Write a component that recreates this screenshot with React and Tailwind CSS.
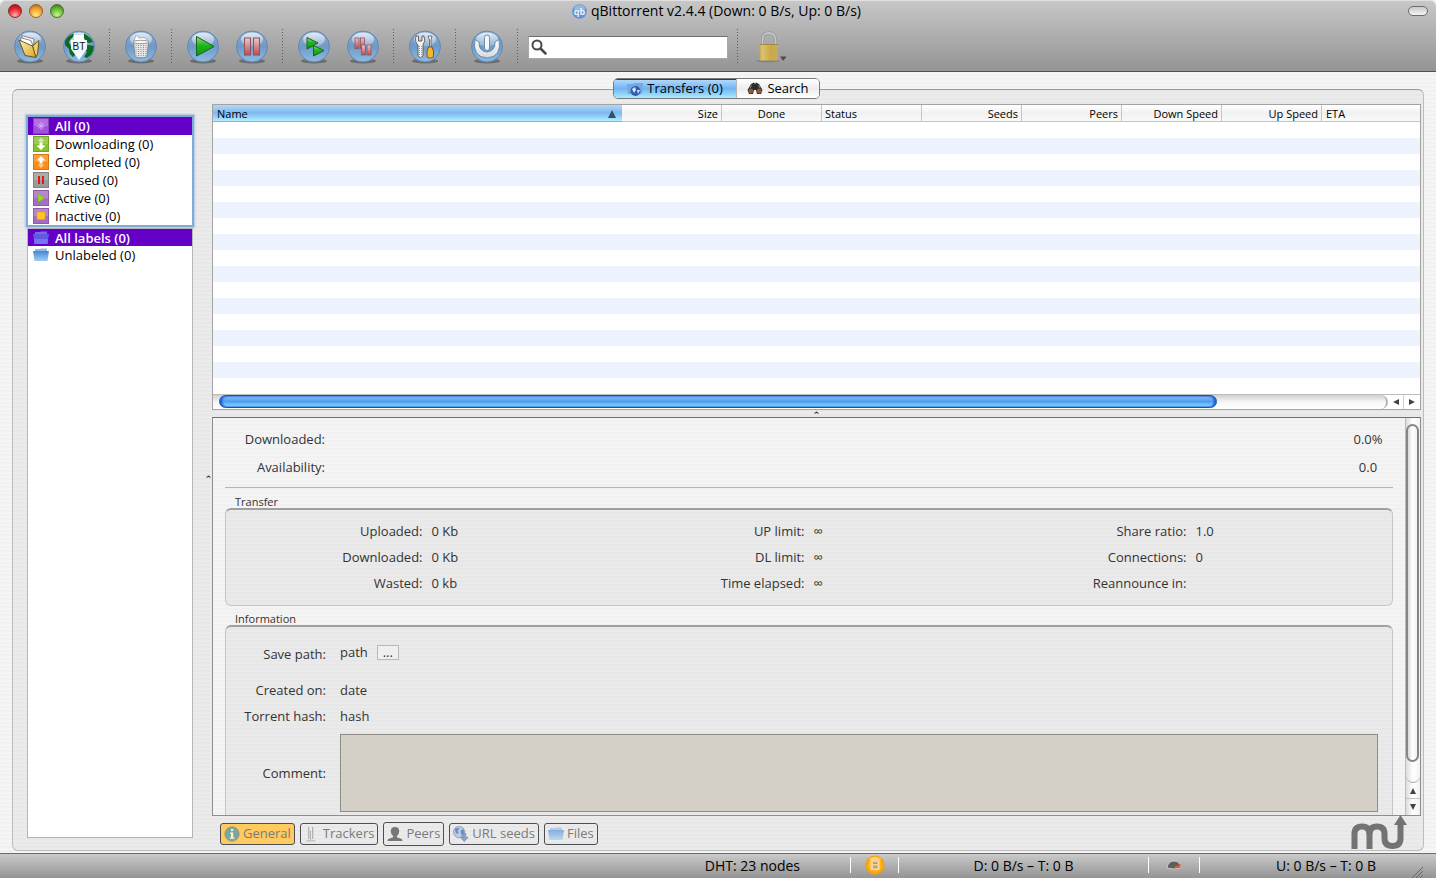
const SIDEBAR_FILTERS = [
  { id: "all", label: "All (0)" },
  { id: "downloading", label: "Downloading (0)" },
  { id: "completed", label: "Completed (0)" },
  { id: "paused", label: "Paused (0)" },
  { id: "active", label: "Active (0)" },
  { id: "inactive", label: "Inactive (0)" },
];

const COLUMNS = [
  { label: "Size", align: "text-right" },
  { label: "Done", align: "text-center" },
  { label: "Status", align: "text-left" },
  { label: "Seeds", align: "text-right" },
  { label: "Peers", align: "text-right" },
  { label: "Down Speed", align: "text-right" },
  { label: "Up Speed", align: "text-right" },
];

const TRANSFER_STATS = [
  [
    ["Uploaded:", "0 Kb"],
    ["Downloaded:", "0 Kb"],
    ["Wasted:", "0 kb"],
  ],
  [
    ["UP limit:", "∞"],
    ["DL limit:", "∞"],
    ["Time elapsed:", "∞"],
  ],
  [
    ["Share ratio:", "1.0"],
    ["Connections:", "0"],
    ["Reannounce in:", ""],
  ],
];

/* ---------- shared gradients ---------- */

function Gradients() {
  return (
    <svg width="0" height="0" className="absolute" aria-hidden="true">
      <defs>
        <linearGradient id="orb" x1="0" y1="0" x2="0" y2="1">
          <stop offset="0" stopColor="#8fb0d3" />
          <stop offset="0.5" stopColor="#7099c6" />
          <stop offset="1" stopColor="#8dbbe6" />
        </linearGradient>
        <linearGradient id="gloss" x1="0" y1="0" x2="0" y2="1">
          <stop offset="0" stopColor="#fff" stopOpacity="0.75" />
          <stop offset="1" stopColor="#fff" stopOpacity="0.2" />
        </linearGradient>
        <linearGradient id="green" x1="0" y1="0" x2="0" y2="1">
          <stop offset="0" stopColor="#8fe08a" />
          <stop offset="0.45" stopColor="#1fb61c" />
          <stop offset="1" stopColor="#0a9a0a" />
        </linearGradient>
        <linearGradient id="red" x1="0" y1="0" x2="0" y2="1">
          <stop offset="0" stopColor="#ecc6cb" />
          <stop offset="1" stopColor="#c14a4e" />
        </linearGradient>
        <linearGradient id="gold" x1="0" y1="0" x2="1" y2="1">
          <stop offset="0" stopColor="#fdf3c0" />
          <stop offset="1" stopColor="#d9a520" />
        </linearGradient>
        <linearGradient id="silver" x1="0" y1="0" x2="0" y2="1">
          <stop offset="0" stopColor="#fff" />
          <stop offset="1" stopColor="#d4d8dc" />
        </linearGradient>
        <linearGradient id="brass" x1="0" y1="0" x2="1" y2="0">
          <stop offset="0" stopColor="#c3a850" />
          <stop offset="0.15" stopColor="#d8c372" />
          <stop offset="0.6" stopColor="#cba943" />
          <stop offset="1" stopColor="#c5ab5c" />
        </linearGradient>
        <linearGradient id="folder" x1="0" y1="0" x2="0" y2="1">
          <stop offset="0" stopColor="#4687cf" />
          <stop offset="1" stopColor="#9fcdfa" />
        </linearGradient>
        <radialGradient id="coin">
          <stop offset="0" stopColor="#ffe26a" />
          <stop offset="0.6" stopColor="#ffb51c" />
          <stop offset="1" stopColor="#f59a08" />
        </radialGradient>
      </defs>
    </svg>
  );
}

/* ---------- toolbar icons ---------- */

function Orb({ children }) {
  return (
    <svg width="34" height="34" viewBox="0 0 34 34" aria-hidden="true">
      <ellipse cx="17" cy="31" rx="13" ry="2.5" fill="#000" opacity="0.3" />
      <circle cx="17" cy="16.5" r="15.5" fill="url(#orb)" stroke="#6288b0" />
      <ellipse cx="17" cy="9.5" rx="11" ry="7" fill="url(#gloss)" />
      {children}
    </svg>
  );
}

function OpenIcon() {
  return (
    <Orb>
      <path d="M8.5 5.5 L21 9 L20.5 16 L11 14 Z" fill="#fff" stroke="#666" strokeWidth="0.8" />
      <path d="M7 7.500 L18 10.500 L20 16 L9 14 Z" fill="#fff" stroke="#666" strokeWidth="0.8" />
      <path d="M19.500 16 L26 10.500 L24.500 24 L22.500 27.500 Z" fill="#f1d066" stroke="#5b4a16" strokeWidth="0.9" />
      <path d="M6 10 L19.500 16 L23 27.500 L12 25.500 Z" fill="url(#gold)" stroke="#5b4a16" strokeWidth="0.9" />
    </Orb>
  );
}

function UrlIcon() {
  return (
    <Orb>
      <path
        d="M3 11 Q6 5 12 3.500 L11 7 L8 10 L7 13 L9 16 L12 19 L14 24 L11 27 L8 24 L7 19 L3 15 Z"
        fill="#0c6b22"
      />
      <path
        d="M22 3.500 Q28 6 31 12 L27 13 L24 12 L22 8 Z M26 15 L32 16 L31 21 L29 25 L25 28 L22 27 L25 22 L22 18 Z"
        fill="#0c6b22"
      />
      <path d="M12 5 h10 v5 h3 v9 L17 30 L9 19 v-9 h3 Z" fill="#fff" opacity="0.92" />
      <text x="17" y="20" textAnchor="middle" fontSize="10" fontFamily="Liberation Sans, sans-serif" fill="#111">
        BT
      </text>
    </Orb>
  );
}

function TrashIcon() {
  return (
    <Orb>
      <path d="M10 11 L12 5 L15 8 L21 7.500 L24 12 Z" fill="#fff" stroke="#999" strokeWidth="0.7" />
      <path d="M9.500 12 H24.500 L23 27 Q17 29 11 27 Z" fill="#e4e4e4" stroke="#777" strokeWidth="0.8" />
      <path
        d="M12 13 V27 M14.500 13 V28 M17 13 V28 M19.500 13 V28 M22 13 V27"
        stroke="#8f8f8f"
        strokeDasharray="1 1"
      />
      <ellipse cx="17" cy="12" rx="8" ry="1.700" fill="#f6f6f6" stroke="#888" strokeWidth="0.8" />
    </Orb>
  );
}

function PlayIcon() {
  return (
    <Orb>
      <path d="M10.500 6.500 L28 16.500 L10.500 26 Z" fill="url(#green)" stroke="#1d5f1f" />
    </Orb>
  );
}

function PauseIcon() {
  return (
    <Orb>
      <rect x="9.500" y="8" width="6" height="17" fill="url(#red)" stroke="#8b5560" />
      <rect x="18.500" y="8" width="6" height="17" fill="url(#red)" stroke="#8b5560" />
    </Orb>
  );
}

function PlayAllIcon() {
  return (
    <Orb>
      <path d="M10 7.500 L21 13 L10 19 Z" fill="url(#green)" stroke="#1d5f1f" />
      <path d="M16.500 15.500 L27 20.500 L16.500 26 Z" fill="url(#green)" stroke="#1d5f1f" />
    </Orb>
  );
}

function PauseAllIcon() {
  return (
    <Orb>
      <g fill="url(#red)" stroke="#8b5560" strokeWidth="0.8">
        <rect x="9" y="8" width="4" height="10.500" />
        <rect x="14.500" y="8" width="4" height="10.500" />
        <rect x="15.500" y="15" width="4" height="10" />
        <rect x="21" y="15" width="4" height="10" />
      </g>
    </Orb>
  );
}

function ToolsIcon() {
  return (
    <Orb>
      <path
        d="M8 6 Q6.500 12 10 15 V26 Q12.500 29 15 26 V15 Q18 11 16 6 L14 6 V11 H10.500 V6 Z"
        fill="#f3f3f3"
        stroke="#555"
        strokeWidth="0.9"
      />
      <path d="M11.500 16 V26 M13.500 16 V26" stroke="#999" strokeDasharray="1 1" />
      <path d="M20 6 H24 L23 10 V18 H21.500 V10 Z" fill="#f7f7f7" stroke="#555" strokeWidth="0.8" />
      <path d="M20.500 17 H24 L25.500 21 V27 Q22.500 29.500 19 27 V21 Z" fill="#f4b72b" stroke="#6e5218" strokeWidth="0.9" />
    </Orb>
  );
}

function PowerIcon() {
  return (
    <Orb>
      <path
        d="M5 9.500 L9 12 Q8.500 21 17 22 Q25.500 21 25 12 L29 9.500 Q32 27 17 28 Q2 27 5 9.500 Z"
        fill="url(#silver)"
        stroke="#56789f"
        strokeWidth="0.8"
      />
      <rect x="14.500" y="5" width="5" height="15.500" rx="2.500" fill="#f4f6f8" stroke="#56789f" strokeWidth="0.8" />
    </Orb>
  );
}

function LockIcon() {
  return (
    <svg width="34" height="34" viewBox="0 0 34 34" aria-hidden="true">
      <ellipse cx="16" cy="31" rx="12" ry="1.500" fill="#000" opacity="0.15" />
      <path d="M10.500 15 V10 Q10.500 3 17 3 Q23.500 3 23.500 10 V15" fill="none" stroke="#8f8f8f" strokeWidth="3" />
      <path d="M10.500 15 V10 Q10.500 3 17 3 Q23.500 3 23.500 10 V15" fill="none" stroke="#c6c6c6" strokeWidth="1.800" />
      <rect x="7.500" y="14.500" width="18.500" height="16" rx="0.5" fill="url(#brass)" />
      <path d="M8 14.500 H26" stroke="#a08a45" />
      <path d="M28 26.500 H34.500 L31.200 31 Z" fill="#4c4c4c" />
    </svg>
  );
}

function ToolButton({ label, children }) {
  return (
    <button type="button" aria-label={label} title={label} className="w-[49px] h-9 shrink-0 flex items-center justify-center">
      {children}
    </button>
  );
}

function ToolSeparator() {
  return (
    <div className="w-[13px] shrink-0 flex justify-center">
      <div className="w-px h-9 bg-[repeating-linear-gradient(to_bottom,#5c5c5c_0px,#5c5c5c_1px,transparent_1px,transparent_3px)]" />
    </div>
  );
}

/* ---------- sidebar ---------- */

function FilterIcon({ id }) {
  const tiles = {
    all: "#a050dc",
    downloading: "#86c12c",
    completed: "#fb8c14",
    paused: "#9a9a98",
    active: "#a76cc6",
    inactive: "#a76cc6",
  };
  return (
    <svg width="16" height="16" viewBox="0 0 16 16" className="shrink-0" aria-hidden="true">
      <rect width="16" height="16" fill={tiles[id]} />
      <rect x="1" y="1" width="14" height="7" fill="#fff" opacity="0.18" />
      <rect x="0.500" y="0.500" width="15" height="15" fill="none" stroke="#000" strokeOpacity="0.15" />
      {id === "all" && (
        <path d="M8 4 V12 M4 8 H12 M5.500 5.500 L10.500 10.500 M10.500 5.500 L5.500 10.500" stroke="#d9b2f6" strokeWidth="0.9" />
      )}
      {id === "downloading" && (
        <>
          <path d="M8 1.500 L11.500 5 H9.500 V7 H6.500 V5 H4.500 Z" fill="#fff" opacity="0.55" />
          <path d="M6.500 7 H9.500 V9.500 H12.500 L8 14 L3.500 9.500 H6.500 Z" fill="#fff" />
        </>
      )}
      {id === "completed" && (
        <>
          <path d="M8 2 L12.500 6.500 H9.500 V9 H6.500 V6.500 H3.500 Z" fill="#fff" />
          <path d="M6.500 9 H9.500 V10.500 H11.500 L8 14 L4.500 10.500 H6.500 Z" fill="#fff" opacity="0.5" />
        </>
      )}
      {id === "paused" && <path d="M5 4 H7 V12 H5 Z M9 4 H11 V12 H9 Z" fill="#e01b1b" />}
      {id === "active" && <path d="M5 3.500 L12 8 L5 12.500 Z" fill="#98d32a" stroke="#78a52b" strokeWidth="0.5" />}
      {id === "inactive" && <rect x="4" y="4" width="8" height="7.500" rx="1" fill="#ffc61f" stroke="#e09a20" strokeWidth="0.500" />}
    </svg>
  );
}

function FolderIcon({ className }) {
  return (
    <svg width="16" height="16" viewBox="0 0 16 16" className={`shrink-0 ${className ?? ""}`} aria-hidden="true">
      <path d="M2 4.500 V2 H7 L8 1.500 H14 V4.500 Z" fill="#8db9ea" />
      <path d="M0 4 H16 L14.500 14 H1.500 Z" fill="url(#folder)" />
    </svg>
  );
}

function SelectedFolderIcon() {
  return (
    <svg width="16" height="16" viewBox="0 0 16 16" className="shrink-0" aria-hidden="true">
      <path d="M2 4.500 V2 H7 L8 1.500 H14 V4.500 Z" fill="#7a68e4" />
      <path d="M0 4 H16 L14.500 14 H1.500 Z" fill="#5f58e4" />
      <path d="M1 9 H15 L14.500 14 H1.500 Z" fill="#7b70f2" />
    </svg>
  );
}

function SidebarRow({ icon, label, selected, height }) {
  return (
    <li>
      <button
        type="button"
        className={`w-full px-[5px] flex items-center gap-[6px] text-[13px] leading-4 ${height} ${
          selected ? "font-semibold text-white bg-[#6400c8]" : "text-black"
        }`}
      >
        {icon}
        {label}
      </button>
    </li>
  );
}

function Sidebar() {
  return (
    <aside className="w-[166px] shrink-0 mt-[13px] mb-3 flex flex-col">
      <ul className="mx-px mb-[3px] bg-white shadow-[0_0_0_2px_#7fabd6,0_0_2px_3px_#a9c6e2]">
        {SIDEBAR_FILTERS.map((f) => (
          <SidebarRow
            key={f.id}
            icon={<FilterIcon id={f.id} />}
            label={f.label}
            selected={f.id === "all"}
            height="h-[18px]"
          />
        ))}
      </ul>
      <ul className="flex-1 bg-white border border-[#b5b5b5]">
        <SidebarRow icon={<SelectedFolderIcon />} label="All labels (0)" selected height="h-[17px]" />
        <SidebarRow icon={<FolderIcon />} label="Unlabeled (0)" height="h-[17px]" />
      </ul>
    </aside>
  );
}

/* ---------- torrent list ---------- */

function TorrentTable() {
  return (
    <section className="h-[306px] shrink-0 flex flex-col border border-[#a3a3a3] bg-white">
      <table className="w-full table-fixed border-separate border-spacing-0 text-[11px] leading-[15px] text-black">
        <thead>
          <tr className="bg-linear-to-b from-white via-[#f1f1f1] to-[#fbfbfb]">
            <th className="w-[409px] p-0 pt-px px-1 text-left font-medium border-b border-[#8cb2d2] bg-linear-to-b from-[#b4d7f7] via-[#7db9ef] to-[#b3eeff]">
              <div className="flex items-center justify-between">
                Name
                <svg width="10" height="8" viewBox="0 0 10 8" className="mr-px" aria-hidden="true">
                  <path d="M5 0 L9 8 H1 Z" fill="#34506c" />
                </svg>
              </div>
            </th>
            {COLUMNS.map((c) => (
              <th
                key={c.label}
                className={`w-[100px] p-0 pt-px px-[3px] font-medium border-b border-r border-[#c4c4c4] ${c.align}`}
              >
                {c.label}
              </th>
            ))}
            <th className="p-0 pt-px px-1 text-left font-medium border-b border-[#c4c4c4]">ETA</th>
          </tr>
        </thead>
      </table>
      <div className="flex-1 bg-[repeating-linear-gradient(to_bottom,#ffffff_0px,#ffffff_16px,#ecf2fe_16px,#ecf2fe_32px)]" />

      {/* horizontal scrollbar */}
      <div className="h-[15px] flex shrink-0 border-t border-[#bdbdbd] bg-white">
        <div className="flex-1 pl-[6px] rounded-r-full border-r-2 border-[#b4b4b4] bg-linear-to-b from-[#cfcfcf] via-[#f6f6f6] to-white">
          <div className="w-[85.500%] h-[13px] rounded-full border border-[#1c4fae] bg-linear-to-b from-[#8fc0f5] via-[#4c9cf0] to-[#94e4ff] shadow-[inset_2px_0_2px_#1558cf,inset_-2px_0_2px_#1558cf]" />
        </div>
        <button type="button" aria-label="Scroll left" className="w-4 flex items-center justify-center border-r border-[#cfcfcf]">
          <svg width="6" height="6" viewBox="0 0 6 6"><path d="M6 0 V6 L0 3 Z" fill="#444" /></svg>
        </button>
        <button type="button" aria-label="Scroll right" className="w-4 flex items-center justify-center">
          <svg width="6" height="6" viewBox="0 0 6 6"><path d="M0 0 V6 L6 3 Z" fill="#444" /></svg>
        </button>
      </div>
    </section>
  );
}

/* ---------- properties ---------- */

function GroupBox({ title, className, children }) {
  return (
    <section className={className}>
      <h2 className="h-[13px] pl-[10px] text-[11px] leading-[13px]">{title}</h2>
      <div className="rounded-md border border-t-2 border-[#c6c6c6] border-t-[#a0a0a0] bg-black/4">{children}</div>
    </section>
  );
}

function Properties() {
  return (
    <section className="flex-1 min-h-0 flex border border-[#8e8e86] border-t-[#6f6f6f] text-[13px] leading-[18px] text-[#333333] bg-[repeating-linear-gradient(to_bottom,#f4f4f4_0px,#f4f4f4_2px,#f1f1f1_2px,#f1f1f1_4px)]">
      <div className="flex-1 min-w-0 overflow-hidden px-3">
        <div className="pt-3 pb-[11px] pr-[5px] border-b border-[#b4b4b4] grid grid-cols-[100px_1fr_40px] gap-y-[10px]">
          <span className="text-right">Downloaded:</span>
          <span />
          <span className="text-center">0.0%</span>
          <span className="text-right">Availability:</span>
          <span />
          <span className="text-center">0.0</span>
        </div>

        <GroupBox title="Transfer" className="mt-[7px]">
          <div className="grid grid-cols-3 px-[10px] pt-3 pb-[13px]">
            {TRANSFER_STATS.map((column, i) => (
              <dl key={i} className="grid grid-cols-2 gap-x-[9px] gap-y-2">
                {column.map(([label, value]) => (
                  <div key={label} className="contents">
                    <dt className="text-right whitespace-nowrap">{label}</dt>
                    <dd>{value}</dd>
                  </div>
                ))}
              </dl>
            ))}
          </div>
        </GroupBox>

        <GroupBox title="Information" className="mt-[6px]">
          <div className="grid grid-cols-[100px_1fr] gap-x-[14px] pr-[14px] pt-4 pb-5">
            <span className="mt-[2px] text-right">Save path:</span>
            <span className="h-[18px] flex items-center gap-[9px]">
              path
              <button
                type="button"
                aria-label="Choose save path"
                className="w-[22px] h-[15px] flex items-center justify-center border border-[#b9b9b9] bg-[#efefef] text-[13px] leading-none"
              >
                ...
              </button>
            </span>
            <span className="mt-[18px] text-right">Created on:</span>
            <span className="mt-[18px]">date</span>
            <span className="mt-2 text-right">Torrent hash:</span>
            <span className="mt-2">hash</span>
            <label htmlFor="comment" className="mt-[9px] self-center text-right">
              Comment:
            </label>
            <textarea
              id="comment"
              readOnly
              className="mt-[9px] w-full h-[78px] block resize-none border border-[#8d8d84] bg-[#d4cfc7]"
            />
          </div>
        </GroupBox>
      </div>

      {/* vertical scrollbar */}
      <div className="w-[15px] shrink-0 flex flex-col border-l border-[#bdbdbd] bg-linear-to-r from-[#dcdcdc] via-white to-[#f2f2f2]">
        <div className="flex-1 pt-[6px] pb-5 rounded-b-full border-b border-[#aaaaaa]">
          <div className="h-full w-[13px] rounded-full border-2 border-[#858585] bg-linear-to-r from-[#d8d8d8] via-white to-[#f1f1f1]" />
        </div>
        <button type="button" aria-label="Scroll up" className="h-4 flex items-center justify-center border-b border-[#c4c4c4]">
          <svg width="6" height="6" viewBox="0 0 6 6"><path d="M0 6 H6 L3 0 Z" fill="#444" /></svg>
        </button>
        <button type="button" aria-label="Scroll down" className="h-4 flex items-center justify-center">
          <svg width="6" height="6" viewBox="0 0 6 6"><path d="M0 0 H6 L3 6 Z" fill="#444" /></svg>
        </button>
      </div>
    </section>
  );
}

function InfoIcon() {
  return (
    <svg width="16" height="16" viewBox="0 0 16 16" className="shrink-0" aria-hidden="true">
      <circle cx="8" cy="8" r="7.200" fill="#7ba6a0" stroke="#8f9a78" strokeWidth="0.800" />
      <path d="M7 3 H9.200 V5 H7 Z M6 6.500 H9.200 V11.500 H10.500 V12.700 H5.800 V11.500 H7 V7.700 H6 Z" fill="#fff3d0" />
    </svg>
  );
}

function TrackersIcon() {
  return (
    <svg width="16" height="16" viewBox="0 0 16 16" className="shrink-0" aria-hidden="true">
      <path d="M4.500 1 V13 M6.500 5 V14 M8.500 1 V13" stroke="#b0b0b0" />
      <path d="M5.500 1 V13 M9.500 1 V13" stroke="#d8d8d8" />
      <path d="M1 15.500 H12 L11 14 H3 Z" fill="#c4c4c4" />
    </svg>
  );
}

function PeersIcon() {
  return (
    <svg width="16" height="16" viewBox="0 0 17 16" className="shrink-0" aria-hidden="true">
      <path
        d="M8.500 0.500 Q13 0.500 13 5 Q13 8 10.500 10 V11.500 L15 13 Q16.500 13.500 16.500 15.500 H0.500 Q0.500 13.500 2 13 L6.500 11.500 V10 Q4 8 4 5 Q4 0.500 8.500 0.500 Z"
        fill="#777"
      />
    </svg>
  );
}

function UrlSeedsIcon() {
  return (
    <svg width="16" height="16" viewBox="0 0 17 17" className="shrink-0" aria-hidden="true">
      <circle cx="6.500" cy="6.500" r="6" fill="#b9cdea" stroke="#7b93b8" strokeWidth="0.800" />
      <path d="M2 3 Q5 1 7 3 L5 5 L6 8 L3 8 Z M8 5 L11 3 L12 7 L9 10 Z" fill="#6c8fc4" />
      <path d="M10.500 8 H13.500 V12 H16 L12 16.500 L8 12 H10.500 Z" fill="#8fa3bf" stroke="#6d7f99" strokeWidth="0.700" />
    </svg>
  );
}

const TAB = "px-[3px] flex items-center gap-[3px] rounded-[3px] border border-[#4d4d54] text-[13px] text-[#7a7a7a]";

function PropertyTabs() {
  return (
    <div className="relative h-[34px] shrink-0 pt-[2px] pl-2 flex items-center gap-[5px]">
      <button type="button" className={`${TAB} h-[22px] bg-[#ffcb60]`}>
        <InfoIcon />
        General
      </button>
      <button type="button" className={`${TAB} h-[22px]`}>
        <TrackersIcon />
        Trackers
      </button>
      <button type="button" className={`${TAB} h-6`}>
        <PeersIcon />
        Peers
      </button>
      <button type="button" className={`${TAB} h-[22px]`}>
        <UrlSeedsIcon />
        URL seeds
      </button>
      <button type="button" className={`${TAB} h-[22px]`}>
        <FolderIcon className="opacity-60" />
        Files
      </button>
      <svg width="56" height="36" viewBox="0 0 56 36" className="absolute right-[14px] -top-px" aria-hidden="true">
        <path d="M3.500 34 V19 Q3.500 11.500 11 11.500 Q18.500 11.500 18.500 19 V34" fill="none" stroke="#737373" strokeWidth="6" />
        <path
          d="M18.500 19 Q18.500 11.500 26 11.500 Q33.500 11.500 33.500 19 V23 Q33.500 31 41.500 31 Q49.500 31 49.500 23 V9"
          fill="none"
          stroke="#737373"
          strokeWidth="6"
        />
        <path d="M43 10 H56 L49.500 0 Z" fill="#737373" />
      </svg>
    </div>
  );
}

/* ---------- window chrome ---------- */

function TitleBar() {
  return (
    <div className="h-[22px] px-2 flex items-center justify-between">
      <div className="w-14 flex gap-[7px]">
        <button
          type="button"
          aria-label="Close"
          className="size-[14px] rounded-full border border-[#8a2a2c] bg-[radial-gradient(circle_at_50%_85%,#ffb0b0,#e8242c_55%,#8c1218)]"
        />
        <button
          type="button"
          aria-label="Minimize"
          className="size-[14px] rounded-full border border-[#9a6020] bg-[radial-gradient(circle_at_50%_85%,#ffee80,#f5a030_55%,#a05a10)]"
        />
        <button
          type="button"
          aria-label="Zoom"
          className="size-[14px] rounded-full border border-[#3f7428] bg-[radial-gradient(circle_at_50%_85%,#c8f590,#6cb83c_55%,#356a18)]"
        />
      </div>
      <h1 className="flex items-center gap-1 pr-[3px] text-[14px] leading-5 text-black">
        <svg width="15" height="15" viewBox="0 0 15 15" aria-hidden="true">
          <circle cx="7.500" cy="7.500" r="7.300" fill="#5f92d8" />
          <ellipse cx="7.500" cy="4.500" rx="5.500" ry="3.500" fill="#fff" opacity="0.35" />
          <text x="7.500" y="10.500" textAnchor="middle" fontSize="9" fontFamily="Open Sans, sans-serif" fontWeight="700" fill="#e8f1fc">
            qb
          </text>
        </svg>
        qBittorrent v2.4.4 (Down: 0 B/s, Up: 0 B/s)
      </h1>
      <div className="w-14 flex justify-end">
        <button
          type="button"
          aria-label="Toggle toolbar"
          className="w-5 h-[10px] rounded-full border border-[#6b6b6b] bg-linear-to-b from-[#c9c9c9] to-[#f4f4f4]"
        />
      </div>
    </div>
  );
}

function Toolbar() {
  return (
    <div className="h-[50px] pl-[5px] flex items-center">
      <ToolButton label="Open"><OpenIcon /></ToolButton>
      <ToolButton label="Download from URL"><UrlIcon /></ToolButton>
      <ToolSeparator />
      <ToolButton label="Delete"><TrashIcon /></ToolButton>
      <ToolSeparator />
      <ToolButton label="Start"><PlayIcon /></ToolButton>
      <ToolButton label="Pause"><PauseIcon /></ToolButton>
      <ToolSeparator />
      <ToolButton label="Start all"><PlayAllIcon /></ToolButton>
      <ToolButton label="Pause all"><PauseAllIcon /></ToolButton>
      <ToolSeparator />
      <ToolButton label="Preferences"><ToolsIcon /></ToolButton>
      <ToolSeparator />
      <ToolButton label="Exit"><PowerIcon /></ToolButton>
      <ToolSeparator />
      <label className="ml-1 mr-[3px] w-[200px] h-[23px] shrink-0 pl-[2px] flex items-center border border-[#a8a8a8] border-t-[#6e6e6e] bg-white">
        <svg width="17" height="17" viewBox="0 0 17 17" aria-hidden="true">
          <circle cx="6" cy="6" r="4.500" fill="none" stroke="#4a4a4a" strokeWidth="2" />
          <path d="M9.500 9.500 L14.500 14.500" stroke="#4a4a4a" strokeWidth="2.500" strokeLinecap="round" />
        </svg>
        <input type="text" aria-label="Filter torrents" className="min-w-0 flex-1 h-full text-[13px] outline-none" />
      </label>
      <ToolSeparator />
      <ToolButton label="Lock"><LockIcon /></ToolButton>
    </div>
  );
}

function MainTabs() {
  return (
    <div className="relative z-10 -mb-[10px] pr-[3px] flex justify-center">
      <div className="h-[21px] flex rounded-[5px] border border-[#7a7a7a] overflow-hidden text-[13px] leading-[19px] text-black">
        <button
          type="button"
          className="w-[122px] flex items-center justify-center gap-1 bg-linear-to-b from-[#b9dcfb] via-[#6fb4f3] to-[#a9ecff] shadow-[inset_0_1px_0_#28348c]"
        >
          <svg width="16" height="14" viewBox="0 0 16 14" aria-hidden="true">
            <path d="M0 2 H6 L7 1 H16 L15 12 H1 Z" fill="#76a9e2" />
            <circle cx="8.500" cy="9" r="5" fill="#2c5fb0" />
            <path d="M5 7 L8 5 L9 8 L7 11 Z M10 8 L13 8 L11 12 Z" fill="#cfe2f8" />
          </svg>
          Transfers (0)
        </button>
        <button
          type="button"
          className="w-[83px] flex items-center justify-center gap-1 border-l border-[#b5b5b5] bg-linear-to-b from-white via-[#ededed] to-white"
        >
          <svg width="16" height="13" viewBox="0 0 16 13" aria-hidden="true">
            <path d="M4 2 L7 0.500 L8 2 L9 0.500 L12 2 L15.500 8 L14 12 H10 L9 8 H7 L6 12 H2 L0.500 8 Z" fill="#2c2c2c" />
            <circle cx="3.800" cy="9" r="2.500" fill="#8a5a3c" />
            <circle cx="12.200" cy="9" r="2.500" fill="#8a5a3c" />
            <path d="M4.500 3 L3 6 M11.500 3 L13 6" stroke="#8d8d8d" />
          </svg>
          Search
        </button>
      </div>
    </div>
  );
}

function StatusDivider() {
  return <div className="w-px h-4 bg-white shrink-0" />;
}

function StatusBar() {
  return (
    <footer className="relative h-[25px] shrink-0 pb-[2px] flex items-center justify-end border-t border-[#6b6b6b] bg-linear-to-b from-[#cacaca] to-[#949494] text-[14px] text-black">
      <span className="mr-[50px]">DHT: 23 nodes</span>
      <StatusDivider />
      <button type="button" aria-label="Connection status" className="w-[47px] flex justify-center">
        <svg width="22" height="20" viewBox="0 0 24 21" aria-hidden="true">
          <circle cx="12" cy="10.500" r="10.500" fill="url(#coin)" />
          <path d="M5 4 Q12 -1 19 4 Q15 9 5 4 Z" fill="#fff" opacity="0.4" />
          <rect x="7" y="5" width="10" height="11" rx="1" fill="#f6d69c" />
          <path d="M10 7 H14.500 V9.500 H10 Z M10 11 H14.500 V14 H10 Z" fill="#b98b50" />
          <path d="M11 8 H13.500 M11 12.500 H13.500" stroke="#f6dcae" strokeWidth="0.800" />
        </svg>
      </button>
      <StatusDivider />
      <span className="w-[249px] text-center">D: 0 B/s – T: 0 B</span>
      <StatusDivider />
      <button type="button" aria-label="Alternative speed limits" className="w-[50px] flex justify-center">
        <svg width="16" height="10" viewBox="0 0 16 10" aria-hidden="true">
          <path d="M1 8 Q2 1 8 1 Q14 1 15 8 Q8 10 1 8 Z" fill="#5e5e5e" stroke="#ddd" strokeWidth="0.800" />
          <path d="M8 7 L15 4 L14 8 H8 Z" fill="#e2572c" />
        </svg>
      </button>
      <StatusDivider />
      <span className="w-[236px] pl-4 text-center">U: 0 B/s – T: 0 B</span>
      <svg width="12" height="12" viewBox="0 0 12 12" className="absolute right-3 bottom-0" aria-hidden="true">
        <path d="M0 12 L11 1 M4 12 L11 5 M8 12 L11 9" stroke="#666" />
      </svg>
    </footer>
  );
}

function SplitterMark() {
  return (
    <svg width="5" height="4" viewBox="0 0 5 4" aria-hidden="true">
      <path d="M0 3 Q2.500 -2 5 3 L2.500 2 Z" fill="#333" />
    </svg>
  );
}

export default function App() {
  return (
    <div
      className={
        "h-screen flex flex-col overflow-hidden font-['Open_Sans','Noto_Sans',sans-serif] " +
        "bg-[repeating-linear-gradient(to_bottom,#f5f5f5_0px,#f5f5f5_2px,#f1f1f1_2px,#f1f1f1_4px)]"
      }
    >
      <Gradients />
      <header className="h-[72px] shrink-0 rounded-t-md border-b border-[#515151] bg-linear-to-b from-[#c8c8c8] to-[#949494] shadow-[inset_0_1px_0_#e0e0e0]">
        <TitleBar />
        <Toolbar />
      </header>

      <main className="flex-1 min-h-0 pt-[6px] pb-[2px] px-3 flex flex-col">
        <MainTabs />
        <div className="flex-1 min-h-0 pt-[14px] pl-[14px] pr-[2px] flex rounded-md border border-[#bdbdbd] border-t-[#999999] bg-black/4">
          <Sidebar />
          <div className="w-[19px] shrink-0 pr-px flex items-center justify-end">
            <SplitterMark />
          </div>
          <div className="flex-1 min-w-0 flex flex-col">
            <TorrentTable />
            <div className="h-[7px] shrink-0 pt-px flex items-start justify-center">
              <SplitterMark />
            </div>
            <Properties />
            <PropertyTabs />
          </div>
        </div>
      </main>

      <StatusBar />
    </div>
  );
}
